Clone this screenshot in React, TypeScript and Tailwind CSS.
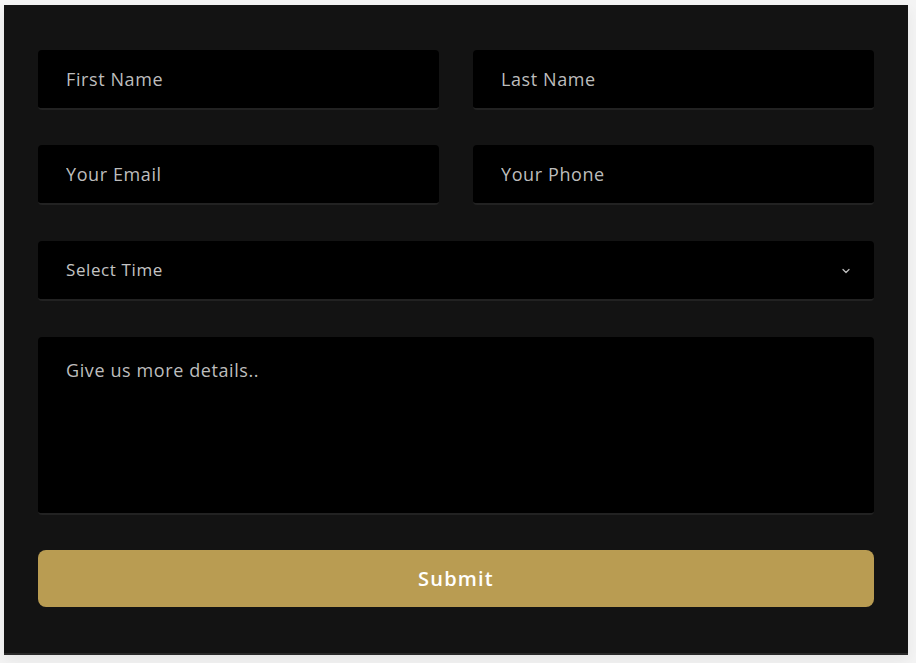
import { ChevronDown } from 'lucide-react';

const fieldBase =
  'w-full bg-black rounded-[4px] border-b-2 border-[#222222] px-[28px] text-[#c4c4c4] placeholder:text-[#bdbdbd] outline-none';

function Field({ placeholder }: { placeholder: string }) {
  return (
    <input
      type="text"
      placeholder={placeholder}
      className={`${fieldBase} h-[60px] text-[18px] tracking-[0.6px]`}
    />
  );
}

export default function App() {
  return (
    <div className="min-h-[663px] bg-[#f4f4f4] pl-[4px] pt-[5px] font-['Open_Sans',sans-serif]">
      <form
        className="w-[904px] h-[650px] bg-[#131313] border-b-2 border-[#2a2a2a] px-[34px] pt-[45px] flex flex-col shadow-[0_6px_14px_rgba(0,0,0,0.06)]"
        onSubmit={(e) => e.preventDefault()}
      >
        <div className="grid grid-cols-2 gap-[34px]">
          <Field placeholder="First Name" />
          <Field placeholder="Last Name" />
        </div>
        <div className="grid grid-cols-2 gap-[34px] mt-[35px]">
          <Field placeholder="Your Email" />
          <Field placeholder="Your Phone" />
        </div>
        <div className="relative mt-[36px]">
          <select
            defaultValue=""
            className={`${fieldBase} h-[60px] appearance-none text-[17px] tracking-[0.6px]`}
          >
            <option value="" disabled>
              Select Time
            </option>
            <option>Morning</option>
            <option>Afternoon</option>
            <option>Evening</option>
          </select>
          <ChevronDown
            size={12}
            strokeWidth={2.5}
            className="absolute right-[22px] top-1/2 -translate-y-1/2 text-[#bdbdbd] pointer-events-none"
          />
        </div>
        <textarea
          placeholder="Give us more details.."
          className={`${fieldBase} h-[178px] pt-[20px] text-[18px] tracking-[0.6px] resize-none mt-[36px]`}
        />
        <button
          type="submit"
          className="mt-[35px] h-[57px] w-full rounded-[8px] bg-[#b99c52] text-white text-[20px] tracking-[1.2px] font-semibold"
        >
          Submit
        </button>
      </form>
    </div>
  );
}
